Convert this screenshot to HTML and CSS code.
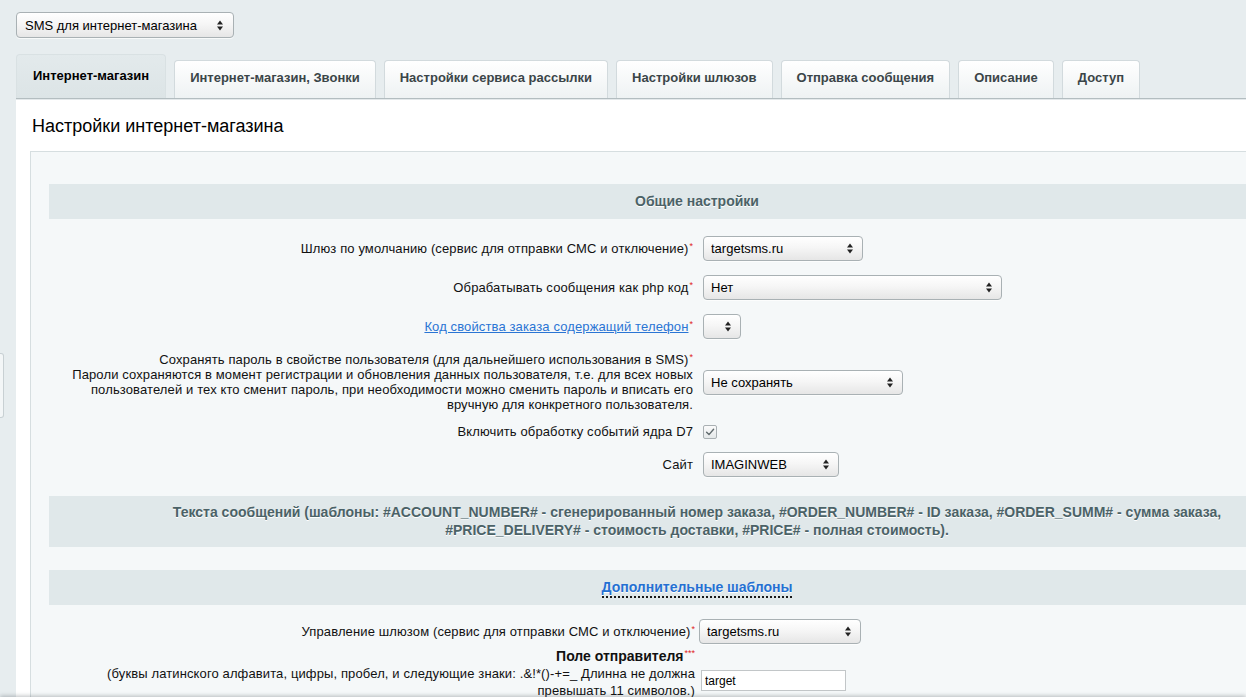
FILE: index.html
```html
<!DOCTYPE html>
<html lang="ru">
<head>
<meta charset="utf-8">
<title>SMS для интернет-магазина — настройки модуля</title>
<link rel="stylesheet" href="styles.css">
</head>
<body>
<div class="side-handle"></div>

<div class="module-bar">
  <span class="sel sel-module">
    <select class="select"><option>SMS для интернет-магазина</option></select>
    <svg class="sel-arrows" viewBox="0 0 6 11" width="6" height="11"><polygon points="0,4.5 3,0.5 6,4.5"/><polygon points="0,6.5 3,10.5 6,6.5"/></svg>
  </span>
</div>

<div class="tabs">
  <div class="tab tab-active">Интернет-магазин</div>
  <div class="tab">Интернет-магазин, Звонки</div>
  <div class="tab">Настройки сервиса рассылки</div>
  <div class="tab">Настройки шлюзов</div>
  <div class="tab">Отправка сообщения</div>
  <div class="tab">Описание</div>
  <div class="tab">Доступ</div>
</div>

<div class="content">
  <h1 class="title">Настройки интернет-магазина</h1>

  <div class="panel">
    <div class="heading">Общие настройки</div>

    <div class="rows rows-main">
      <div class="row">
        <div class="label">Шлюз по умолчанию (сервис для отправки СМС и отключение)<span class="req">*</span></div>
        <div class="field">
          <span class="sel sel-gateway">
            <select class="select"><option>targetsms.ru</option></select>
            <svg class="sel-arrows" viewBox="0 0 6 11" width="6" height="11"><polygon points="0,4.5 3,0.5 6,4.5"/><polygon points="0,6.5 3,10.5 6,6.5"/></svg>
          </span>
        </div>
      </div>

      <div class="row">
        <div class="label">Обрабатывать сообщения как php код<span class="req">*</span></div>
        <div class="field">
          <span class="sel sel-php">
            <select class="select"><option>Нет</option></select>
            <svg class="sel-arrows" viewBox="0 0 6 11" width="6" height="11"><polygon points="0,4.5 3,0.5 6,4.5"/><polygon points="0,6.5 3,10.5 6,6.5"/></svg>
          </span>
        </div>
      </div>

      <div class="row">
        <div class="label"><a class="link" href="#">Код свойства заказа содержащий телефон</a><span class="req">*</span></div>
        <div class="field">
          <span class="sel sel-phone">
            <select class="select"><option></option></select>
            <svg class="sel-arrows" viewBox="0 0 6 11" width="6" height="11"><polygon points="0,4.5 3,0.5 6,4.5"/><polygon points="0,6.5 3,10.5 6,6.5"/></svg>
          </span>
        </div>
      </div>

      <div class="row row-tall">
        <div class="label">Сохранять пароль в свойстве пользователя (для дальнейшего использования в SMS)<span class="req">*</span><br>Пароли сохраняются в момент регистрации и обновления данных пользователя, т.е. для всех новых<br>пользователей и тех кто сменит пароль, при необходимости можно сменить пароль и вписать его<br>вручную для конкретного пользователя.</div>
        <div class="field">
          <span class="sel sel-pass">
            <select class="select"><option>Не сохранять</option></select>
            <svg class="sel-arrows" viewBox="0 0 6 11" width="6" height="11"><polygon points="0,4.5 3,0.5 6,4.5"/><polygon points="0,6.5 3,10.5 6,6.5"/></svg>
          </span>
        </div>
      </div>

      <div class="row row-check">
        <div class="label">Включить обработку событий ядра D7</div>
        <div class="field">
          <span class="check">
            <svg viewBox="0 0 14 14" width="14" height="14"><path d="M3.6 7.3 L6 9.6 L10.6 4.3" fill="none" stroke="#5f6a6d" stroke-width="1.4" stroke-linecap="round" stroke-linejoin="round"/></svg>
          </span>
        </div>
      </div>

      <div class="row">
        <div class="label">Сайт</div>
        <div class="field">
          <span class="sel sel-site">
            <select class="select"><option>IMAGINWEB</option></select>
            <svg class="sel-arrows" viewBox="0 0 6 11" width="6" height="11"><polygon points="0,4.5 3,0.5 6,4.5"/><polygon points="0,6.5 3,10.5 6,6.5"/></svg>
          </span>
        </div>
      </div>
    </div>

    <div class="heading heading-multi">Текста сообщений (шаблоны: #ACCOUNT_NUMBER# - сгенерированный номер заказа, #ORDER_NUMBER# - ID заказа, #ORDER_SUMM# - сумма заказа,<br>#PRICE_DELIVERY# - стоимость доставки, #PRICE# - полная стоимость).</div>

    <div class="heading heading-extra"><a class="link-dotted" href="#">Дополнительные шаблоны</a></div>

    <div class="rows rows-extra">
      <div class="row">
        <div class="label">Управление шлюзом (сервис для отправки СМС и отключение)<span class="req">*</span></div>
        <div class="field">
          <span class="sel sel-control">
            <select class="select"><option>targetsms.ru</option></select>
            <svg class="sel-arrows" viewBox="0 0 6 11" width="6" height="11"><polygon points="0,4.5 3,0.5 6,4.5"/><polygon points="0,6.5 3,10.5 6,6.5"/></svg>
          </span>
        </div>
      </div>

      <div class="row row-sender">
        <div class="label label-loose"><b class="field-name">Поле отправителя</b><span class="req">***</span><br>(буквы латинского алфавита, цифры, пробел, и следующие знаки: .&amp;!*()-+=_ Длинна не должна<br>превышать 11 символов.)<br>Для использования другого имени отправителя его нужно согласовать.</div>
        <div class="field field-top">
          <input class="text-input" type="text" value="target">
        </div>
      </div>
    </div>
  </div>
</div>

<div class="bottom-edge"></div>
</body>
</html>
```

FILE: styles.css
```css
html, body {
  height: 100%;
  overflow: hidden;
}

body {
  margin: 0;
  padding: 12px 0 0 16px;
  background: #e7edef;
  font-family: "Liberation Sans", Arial, sans-serif;
  font-size: 13px;
  color: #000;
  width: 1400px;
}

/* collapsed side menu toggle on the left edge */
.side-handle {
  position: fixed;
  left: 0;
  top: 353px;
  width: 3px;
  height: 63px;
  background: #f3f6f7;
  border: 1px solid #c8d0d3;
  border-left: none;
  border-radius: 0 3px 3px 0;
}

/* ---------- selects ---------- */
.sel {
  position: relative;
  display: inline-block;
  vertical-align: middle;
  height: 25px;
}

.select {
  -webkit-appearance: none;
  appearance: none;
  display: block;
  width: 100%;
  height: 25px;
  margin: 0;
  padding: 0 20px 0 7px;
  border: 1px solid #a9b1b4;
  border-radius: 4px;
  background: linear-gradient(#ffffff 0%, #f6f6f6 45%, #e6e6e6 100%);
  box-shadow: 0 1px 0 rgba(255, 255, 255, 0.7);
  font-family: "Liberation Sans", Arial, sans-serif;
  font-size: 13px;
  color: #000;
  outline: none;
}

.sel-arrows {
  position: absolute;
  right: 10px;
  top: 7px;
  fill: #222;
  pointer-events: none;
}

.sel-module { width: 218px; height: 26px; }
.sel-module .select { height: 26px; padding-left: 8px; }
.sel-module .sel-arrows { right: 11px; top: 8px; }

.sel-gateway { width: 160px; }
.sel-php { width: 299px; }
.sel-phone { width: 38px; }
.sel-pass { width: 200px; }
.sel-site { width: 136px; }
.sel-control { width: 162px; }

/* ---------- tabs ---------- */
.module-bar {
  height: 26px;
}

.tabs {
  display: flex;
  align-items: flex-end;
  gap: 8px;
  margin-top: 16px;
  height: 44px;
}

.tab {
  display: flex;
  align-items: center;
  box-sizing: border-box;
  height: 38px;
  padding: 0 15px 5px;
  border: 1px solid #d2dadd;
  border-bottom: none;
  border-radius: 4px 4px 0 0;
  background: linear-gradient(#ffffff, #eef2f3);
  font-weight: bold;
  font-size: 13px;
  color: #3b4548;
  white-space: nowrap;
}

.tab-active {
  height: 44px;
  padding: 0 16px 2px;
  border-color: #d9e1e3;
  background: linear-gradient(#e3eaec, #dce4e6);
  color: #000;
}

/* ---------- content ---------- */
.content {
  width: 1364px;
  background: #fff;
  border-top: 1px solid #b3bdc0;
  box-shadow: inset 0 1px 0 #e4e9eb;
  padding: 16px 0 0;
}

.title {
  margin: 0;
  padding-left: 16px;
  font-size: 18px;
  line-height: 22px;
  font-weight: normal;
  color: #000;
}

.panel {
  margin: 14px 14px 0;
  border: 1px solid #d6dee0;
  background: #f5f8f9;
  padding: 32px 20px 40px 18px;
}

.heading {
  height: 35px;
  line-height: 35px;
  background: #e0e8ea;
  text-align: center;
  font-size: 14px;
  font-weight: bold;
  color: #4b6267;
  text-shadow: 0 1px #fff;
}

.heading-multi {
  height: auto;
  line-height: 18px;
  padding: 7px 0 8px;
  margin-top: 12px;
}

.heading-extra {
  margin-top: 23px;
}

.link-dotted {
  color: #2570d2;
  text-decoration: none;
  border-bottom: 2px dotted #1a1a1a;
  padding-bottom: 1px;
}

/* ---------- form rows ---------- */
.rows-main {
  padding-top: 10px;
}

.rows-extra {
  padding-top: 12px;
}

.row {
  display: grid;
  grid-template-columns: 648px 1fr;
  align-items: center;
  padding: 7px 0;
}

.row-tall {
  padding: 6px 0;
}

.row-check {
  padding: 6px 0;
}

.label {
  text-align: right;
  padding-right: 4px;
  line-height: 15px;
  letter-spacing: 0.12px;
  color: #111;
}

.field {
  padding-left: 6px;
  line-height: 0;
}

.rows-extra .row {
  padding: 2px 0;
}

.rows-extra .label {
  padding-right: 2px;
}

.rows-extra .field {
  padding-left: 2px;
}

.label-loose {
  line-height: 17px;
}

.field-name {
  font-size: 14px;
  letter-spacing: 0;
}

.row-sender {
  align-items: start;
}

.field-top {
  padding-top: 22px;
}

.req {
  color: #e02424;
  font-size: 9px;
  vertical-align: top;
  line-height: 10px;
  margin-left: 1px;
  letter-spacing: 0;
}

.link {
  color: #2a75d4;
  text-decoration: underline;
}

.check {
  display: inline-block;
  box-sizing: border-box;
  width: 14px;
  height: 14px;
  border: 1px solid #a9b0b3;
  border-radius: 2px;
  background: linear-gradient(#fbfbfb, #e4e8e9);
  line-height: 0;
}

.check svg {
  margin: -1px 0 0 -1px;
}

.text-input {
  box-sizing: border-box;
  width: 145px;
  height: 21px;
  margin: 0 0 0 2px;
  padding: 0 3px;
  border: 1px solid #c2c6c8;
  border-radius: 0;
  background: #fff;
  font-family: "Liberation Sans", Arial, sans-serif;
  font-size: 12px;
  color: #000;
}

/* shadow of the panel docked below the window */
.bottom-edge {
  position: fixed;
  left: 0;
  right: 0;
  bottom: -10px;
  height: 10px;
  box-shadow: 0 -1px 4px rgba(60, 70, 75, 0.35);
}
```
